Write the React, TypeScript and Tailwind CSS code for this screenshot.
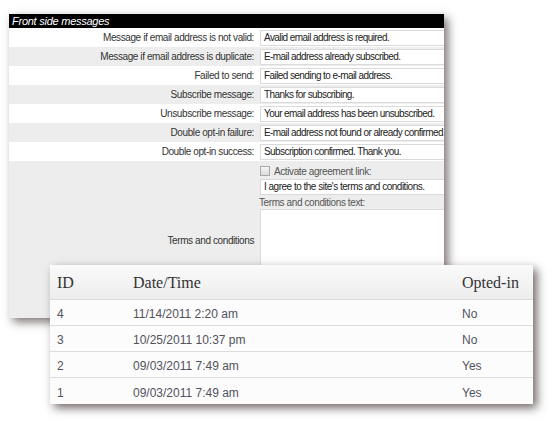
import React from "react";

const rows: { label: string; value: string }[] = [
  { label: "Message if email address is not valid:", value: "Avalid email address is required." },
  { label: "Message if email address is duplicate:", value: "E-mail address already subscribed." },
  { label: "Failed to send:", value: "Failed sending to e-mail address." },
  { label: "Subscribe message:", value: "Thanks for subscribing." },
  { label: "Unsubscribe message:", value: "Your email address has been unsubscribed." },
  { label: "Double opt-in failure:", value: "E-mail address not found or already confirmed." },
  { label: "Double opt-in success:", value: "Subscription confirmed. Thank you." },
];

const subs = [
  { id: "4", date: "11/14/2011 2:20 am", opted: "No" },
  { id: "3", date: "10/25/2011 10:37 pm", opted: "No" },
  { id: "2", date: "09/03/2011 7:49 am", opted: "Yes" },
  { id: "1", date: "09/03/2011 7:49 am", opted: "Yes" },
];

export default function App() {
  return (
    <div className="relative w-[550px] h-[429px] bg-white overflow-hidden">
      {/* Back panel */}
      <div
        className="ml-[9px] mt-[14px] w-[435px] h-[304px] bg-[#ededed] overflow-hidden flex flex-col shadow-[4px_4px_9px_rgba(70,55,55,0.7)] text-[10px] tracking-[-0.4px] text-[#333]"
        style={{ fontFamily: '"Liberation Sans", Arial, sans-serif' }}
      >
        <div className="h-[14px] bg-black text-white italic text-[11px] tracking-[-0.25px] leading-[14px] pl-[3px]">
          Front side messages
        </div>
        {rows.map((r, i) => (
          <div
            key={r.label}
            className={`grid grid-cols-[248px_1fr] h-[19px] items-center ${i % 2 === 0 ? "bg-white" : "bg-[#ededed]"}`}
          >
            <div className="text-right pr-[3px] leading-[19px] whitespace-nowrap">{r.label}</div>
            <div className="pl-[3px]">
              <div className="h-[16px] w-[220px] bg-white border border-[#dadada] pl-[3px] leading-[14px] whitespace-nowrap tracking-[-0.58px] text-[#222]">
                {r.value}
              </div>
            </div>
          </div>
        ))}
        <div className="grid grid-cols-[248px_1fr] flex-1 bg-[#ededed]">
          <div className="flex items-center justify-end pr-[3px] pt-[2px]">Terms and conditions</div>
          <div className="flex flex-col pl-[3px] pt-[4px]">
            <div className="flex items-center h-[12px] gap-[4px] text-[#555]">
              <span className="w-[10px] h-[10px] border border-[#aaa] bg-gradient-to-b from-[#f4f4f4] to-[#dcdcdc]" />
              <span>Activate agreement link:</span>
            </div>
            <div className="mt-[2px] h-[16px] w-[220px] bg-white border border-[#dadada] pl-[3px] leading-[14px] whitespace-nowrap tracking-[-0.5px] text-[#222]">
              I agree to the site's terms and conditions.
            </div>
            <div className="h-[13px] leading-[13px] -ml-[1px] mt-[1px] text-[#555]">Terms and conditions text:</div>
            <div className="h-[105px] w-[220px] bg-white border border-[#dadada]" />
          </div>
        </div>
      </div>

      {/* Front table */}
      <div className="absolute left-[50px] top-[265px] w-[483px] bg-[#fcfcfc] shadow-[4px_4px_9px_rgba(70,55,55,0.75)]">
        <div
          className="grid grid-cols-[76px_329px_1fr] h-[35px] items-center border-b border-[#dcdcdc] bg-gradient-to-b from-[#fafafa] to-[#ededed] text-[16px] text-[#333] pt-[2px]"
          style={{ fontFamily: '"Liberation Serif", Georgia, serif' }}
        >
          <div className="pl-[7px]">ID</div>
          <div className="pl-[7px]">Date/Time</div>
          <div className="pl-[7px]">Opted-in</div>
        </div>
        {subs.map((s, i) => (
          <div
            key={s.id}
            className={`grid grid-cols-[76px_329px_1fr] h-[26px] items-center text-[12px] text-[#52525c] pt-[3px] ${i < subs.length - 1 ? "border-b border-[#dcdcdc]" : ""}`}
            style={{ fontFamily: '"Liberation Sans", Arial, sans-serif' }}
          >
            <div className="pl-[7px]">{s.id}</div>
            <div className="pl-[7px]">{s.date}</div>
            <div className="pl-[7px]">{s.opted}</div>
          </div>
        ))}
      </div>
    </div>
  );
}
